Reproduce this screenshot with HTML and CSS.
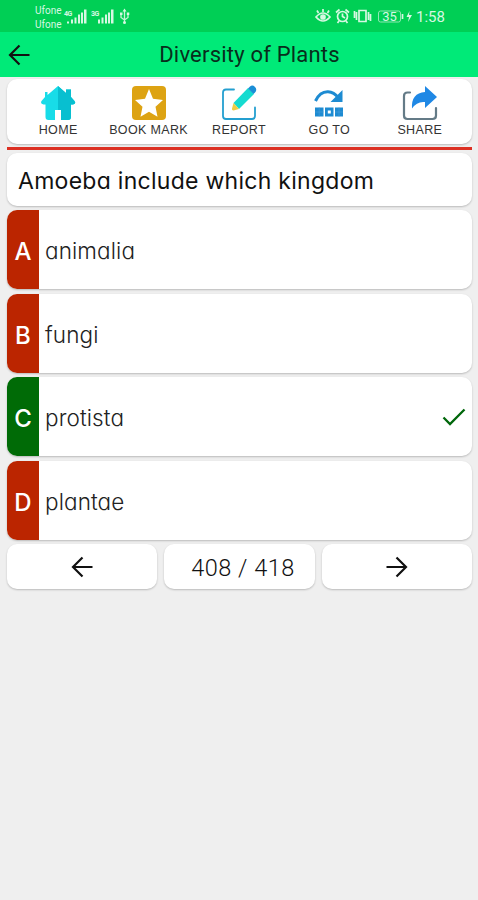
FILE: index.html
```html
<!DOCTYPE html>
<html lang="en">
<head>
<meta charset="utf-8">
<title>Diversity of Plants</title>
<link rel="stylesheet" href="styles.css">
</head>
<body>
<div class="status">
  <div class="carriers"><span>Ufone</span><span>Ufone</span></div>
  <svg class="signals" width="70" height="24" viewBox="0 0 70 24" fill="#d6f8e2">
    <text x="1" y="9" class="gen">4G</text>
    <path d="M8 19h2v4H8zM11.500 17h2v6h-2zM15 14h2v9h-2zM18 12h2v11h-2zM21 9h2.500v14H21zM4 21h2v2H4z"/>
    <text x="28" y="9" class="gen">3G</text>
    <path d="M35 19h2v4h-2zM38.500 17h2v6h-2zM42 14h2v9h-2zM45 12h2v11h-2zM48 9h2.500v14H48z"/>
    <path d="M61.500 10v12M58 13v4l3.500 2.500 3.500-2.500v-4" fill="none" stroke="#c4f3d5" stroke-width="1.300"/>
    <path d="M61.500 8l2 3h-4zM57 12h2.500v2.500H57zM63.800 12h2.500v2.500h-2.500z"/><circle cx="61.500" cy="22" r="1.500"/>
  </svg>
  <svg class="indicators" width="98" height="16" viewBox="0 0 98 16" fill="none" stroke="#d6f8e2" stroke-width="1.700">
    <path d="M1 9q7-8 14 0q-7 8-14 0zM8 4V1M3.500 5L2 2.500M12.500 5L14 2.500"/><circle cx="8" cy="9" r="2" fill="#d6f8e2"/>
    <circle cx="27.500" cy="8.500" r="5"/><path d="M27.500 5.500v3l2.500 1.500M21 4.500l3.500-3M34 4.500l-3.500-3M24 13l-1.500 2M31 13l1.500 2"/>
    <path d="M44 2.500h7v11h-7zM41.500 4v8M53.500 4v8M39.500 3v7M55.500 6v7"/>
    <rect x="63.500" y="3" width="22" height="11" rx="2" stroke-width="1" stroke="#8ee8b3"/><path d="M87.500 6v5"/>
    <text x="74.500" y="13" class="level">35</text>
    <path d="M94.500 3l-3 6h2.500l-1 5 4-7h-3z" fill="#d6f8e2" stroke="none"/>
  </svg>
  <span class="time">1:58</span>
</div>
<header class="appbar">
  <svg class="back" width="22" height="22" viewBox="0 0 22 22"><path class="arrow" d="M21.500 11H2M11.500 1.500L2 11l9.500 9.500"/></svg>
  <h1>Diversity of Plants</h1>
</header>
<main>
  <nav class="tools card">
    <a class="tool">
      <svg width="36" height="36" viewBox="0 0 36 36"><path fill="#18dce8" d="M18 1L7.500 10V7H5v5L1.500 16q-1.500 3 2 3.500h2V32q0 3 3 3H15V25h6v10h7q3 0 3-3V19.500h2q3.500-.5 1.500-3.500L31 12V4.500h-5V8z"/><path fill="#08bfd0" d="M18 1l8 7V4.500h5V12l3.500 4q2 3-1.500 3.500h-2V32q0 3-3 3h-7V25h-3z"/></svg>
      <span>HOME</span>
    </a>
    <a class="tool">
      <svg width="36" height="36" viewBox="0 0 36 36"><rect x="1" y="1" width="34" height="34" rx="4" fill="#dda313"/><path fill="#fff" d="M18 4l4 9.800 10 1.200-7.500 6.800 2 10L18 26.700 9.500 31.800l2-10L4 15l10-1.200z"/></svg>
      <span>BOOK MARK</span>
    </a>
    <a class="tool">
      <svg width="36" height="36" viewBox="0 0 36 36"><path fill="none" stroke="#249fd0" stroke-width="1.800" stroke-linecap="round" d="M13 4.500H5q-3 0-3 3V31q0 3 3 3h26q3 0 3-3v-8.500"/><path fill="#15dbd0" d="M27 3l6 6L18 24 12.500 18z"/><path fill="#1b8ed6" d="M27 3.500l2-2q2.500-2 5 .5t0 5.500l-1.500 1.500z"/><path fill="#f0cc43" d="M12.500 18l5.500 6-5.500 1.500q-2 0-1.500-2z"/></svg>
      <span>REPORT</span>
    </a>
    <a class="tool">
      <svg width="36" height="36" viewBox="0 0 36 36"><path fill="none" stroke="#1d8bd2" stroke-width="3" d="M4.500 16Q9 6.500 17 6.800 23 7 27.500 13"/><path fill="#1d8bd2" d="M31.500 5v12H19.500z"/><path fill="#1d8bd2" d="M4 22.500h8.500v9H4zM14 22.500h8.500v9H14zM24 22.500h8v9h-8z"/><path fill="#fff" d="M16.800 25.500h3v3h-3z"/><path stroke="#4b9fd9" stroke-width=".6" d="M8.200 22.500v9M4 27h8.500M28 22.500v9M24 27h8"/></svg>
      <span>GO TO</span>
    </a>
    <a class="tool">
      <svg width="36" height="36" viewBox="0 0 36 36"><path fill="none" stroke="#647b87" stroke-width="2.200" stroke-linecap="round" d="M8 7.500H5.500Q2 7.500 2 11v19.500Q2 34 5.500 34h25q3.500 0 3.500-3.500V23"/><path fill="#1f88e5" d="M23 1l12 11-12 11v-6q-8-1-13 6.500Q9 8 23 7z"/></svg>
      <span>SHARE</span>
    </a>
  </nav>
  <hr class="rule">
  <section class="question card"><span>Amoeba include which kingdom</span></section>
  <section class="option card"><b>A</b><span>animalia</span></section>
  <section class="option card"><b>B</b><span>fungi</span></section>
  <section class="option correct card"><b>C</b><span>protista</span>
    <svg class="check" width="24" height="20" viewBox="0 0 24 20"><path d="M1.500 10.500l6.500 6.500L22.500 2.500"/></svg>
  </section>
  <section class="option card"><b>D</b><span>plantae</span></section>
  <div class="pager">
    <button class="card"><svg width="22" height="22" viewBox="0 0 22 22"><path class="arrow" d="M21.500 11H2M11.500 1.500L2 11l9.500 9.500"/></svg></button>
    <div class="count card">408 / 418</div>
    <button class="card"><svg width="22" height="22" viewBox="0 0 22 22"><path class="arrow" d="M.5 11H20M10.500 1.500L20 11l-9.500 9.500"/></svg></button>
  </div>
</main>
</body>
</html>
```
FILE: styles.css
```css
* { box-sizing: border-box; }

body {
  margin: 0;
  min-height: 900px;
  background: #efefef;
  color: #111;
  font-family: Inter, "Liberation Sans", sans-serif;
  font-feature-settings: "cv11" 1;
}

svg { display: block; flex: none; }

.status {
  display: flex;
  height: 32px;
  padding-left: 35px;
  background: #00cf55;
  color: #d6f8e2;
  font-family: Roboto, sans-serif;
}
.carriers {
  display: flex;
  flex-direction: column;
  width: 28px;
  padding-top: 4px;
  font-size: 10px;
  line-height: 14px;
}
.gen { font: 700 7px Roboto, sans-serif; letter-spacing: -0.5px; }
.signals { margin-top: 3px; overflow: visible; }
.signals .gen { transform: translateY(4px); }
.signals path,
.signals circle { transform: translateY(-2.5px); }
.indicators { margin: 8px 0 0 182px; }
.level { font: 13px Roboto, sans-serif; text-anchor: middle; fill: #d6f8e2; stroke: none; }
.time { margin-left: 3px; font-size: 15px; line-height: 34px; }

.appbar {
  display: grid;
  grid-template-columns: 22px 1fr 22px;
  align-items: center;
  height: 45px;
  padding: 0 0 0 8px;
  background: #00ea78;
}
.appbar h1 {
  margin: 0 0 0 13px;
  text-align: center;
  font: 400 22px Roboto, sans-serif;
  letter-spacing: 0.2px;
  color: #082e1c;
}
.arrow { fill: none; stroke: #111; stroke-width: 2.2; }

main { padding: 2px 6px 0 7px; }

.card {
  background: #fff;
  border-radius: 10px;
  box-shadow: 0 1px 2px rgba(0, 0, 0, 0.22);
}

.tools {
  display: grid;
  grid-template-columns: repeat(5, 1fr);
  height: 65px;
  padding: 6px 7px 0 6px;
}
.tool {
  display: flex;
  flex-direction: column;
  align-items: center;
  font: 12.5px/18px "Liberation Sans", sans-serif;
  letter-spacing: 0.35px;
  color: #333;
  white-space: nowrap;
}

.rule {
  height: 3px;
  margin: 3px 0;
  border: 0;
  background: #dc3023;
}

.question {
  display: flex;
  align-items: center;
  height: 53px;
  padding: 3px 0 0 11px;
  font-size: 23px;
  font-weight: 400;
  letter-spacing: 0.28px;
  white-space: nowrap;
}

.option {
  display: flex;
  align-items: center;
  height: 79px;
  margin-top: 4.6px;
  overflow: hidden;
  font-size: 22.5px;
  font-weight: 300;
  letter-spacing: 0.1px;
  color: #222;
}
.question + .option { margin-top: 4px; }
.option b {
  width: 32px;
  margin-right: 6px;
  padding-top: 3px;
  align-self: stretch;
  background: #bb2500;
  color: #fff;
  font-size: 24px;
  font-weight: 500;
  line-height: 77px;
  text-align: center;
}
.option span { padding-top: 2px; }
.correct b { background: #006b06; }
.check { margin: 0 6px 0 auto; }
.check path { fill: none; stroke: #00670b; stroke-width: 2.3; }

.pager {
  display: grid;
  grid-template-columns: repeat(3, 1fr);
  gap: 7px;
  height: 45px;
  margin-top: 4px;
}
.pager .card {
  display: flex;
  align-items: center;
  justify-content: center;
  padding: 1px 0 0;
  border: 0;
}
.pager .count {
  padding: 4px 0 0 7px;
  font-family: Roboto, sans-serif;
  font-size: 23.5px;
  font-weight: 300;
  letter-spacing: 0.5px;
  color: #111;
}
```
